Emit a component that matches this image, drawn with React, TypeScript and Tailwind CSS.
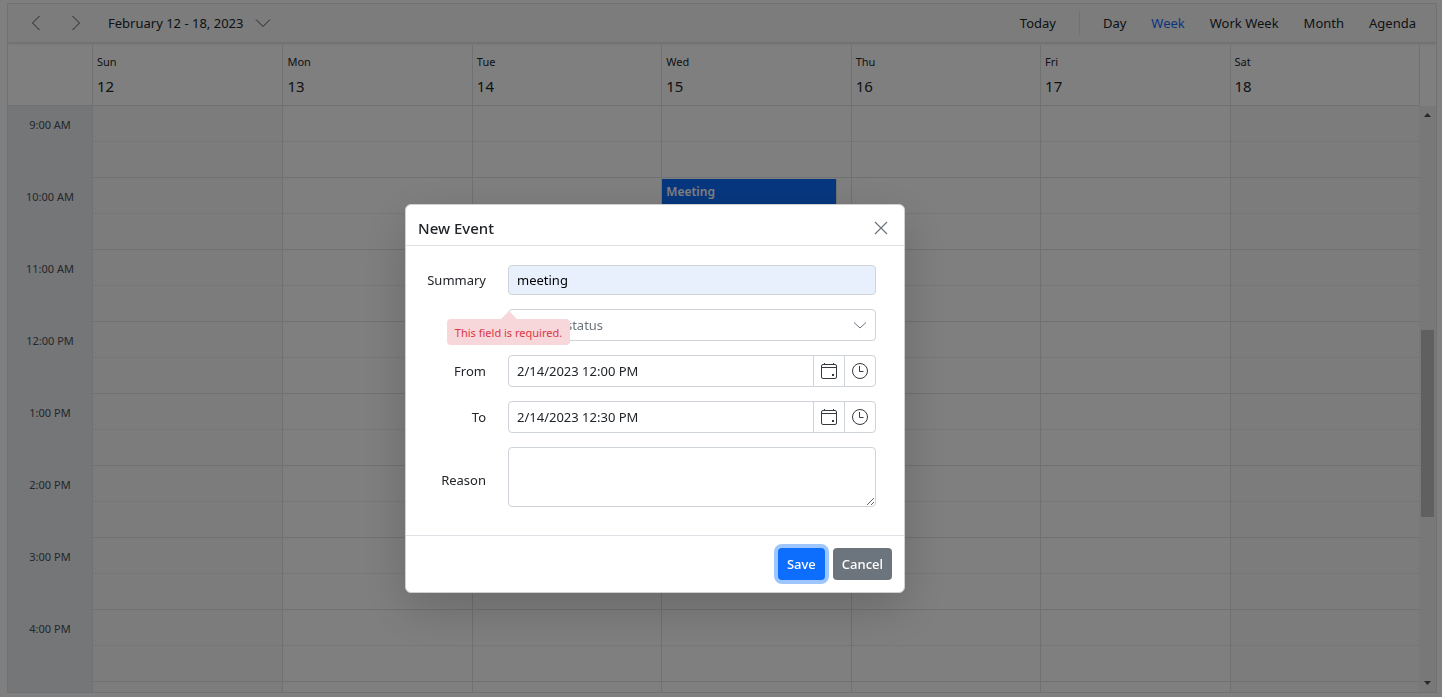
import React from "react";

const days = [
  { name: "Sun", date: 12, off: true },
  { name: "Mon", date: 13, off: false },
  { name: "Tue", date: 14, off: false },
  { name: "Wed", date: 15, off: false },
  { name: "Thu", date: 16, off: false },
  { name: "Fri", date: 17, off: false },
  { name: "Sat", date: 18, off: true },
];

const hours = [
  "9:00 AM",
  "10:00 AM",
  "11:00 AM",
  "12:00 PM",
  "1:00 PM",
  "2:00 PM",
  "3:00 PM",
  "4:00 PM",
];

const slots = [...hours.flatMap((hour) => [hour, ""]), ""];

const views = ["Day", "Week", "Work Week", "Month", "Agenda"];

function Chevron({ points, className }: { points: string; className: string }) {
  return (
    <svg className={className} viewBox="0 0 16 16" fill="none" stroke="currentColor" aria-hidden="true">
      <polyline points={points} />
    </svg>
  );
}

function CalendarIcon() {
  return (
    <svg className="size-4" viewBox="0 0 16 16" fill="none" stroke="currentColor" aria-hidden="true">
      <rect x="0.5" y="1.5" width="15" height="14" rx="1.5" />
      <path d="M0.5 4.5h15M3.5 0v2M12.5 0v2" />
      <rect x="11" y="11" width="2" height="2" fill="currentColor" stroke="none" />
    </svg>
  );
}

function ClockIcon() {
  return (
    <svg className="size-4" viewBox="0 0 16 16" fill="none" stroke="currentColor" aria-hidden="true">
      <circle cx="8" cy="8" r="7.5" />
      <path d="M7.5 3v5.5H11.5" />
    </svg>
  );
}

function Toolbar() {
  return (
    <header className="flex h-[39px] shrink-0 items-center border-b border-[#dee2e6] bg-[#f8f9fa] pr-5 pl-5 shadow-sm">
      <button aria-label="Previous week" className="text-[#495057]">
        <Chevron points="11.5,1 4.5,8 11.5,15" className="size-4" />
      </button>
      <button aria-label="Next week" className="ml-6 text-[#495057]">
        <Chevron points="4.5,1 11.5,8 4.5,15" className="size-4" />
      </button>
      <button className="ml-6 flex items-center gap-3">
        February 12 - 18, 2023
        <Chevron points="1,4.5 8,11.5 15,4.5" className="size-4 text-[#495057]" />
      </button>
      <nav className="ml-auto flex items-center gap-[25px]">
        <button>Today</button>
        <span className="-mx-0.5 h-6 w-px bg-[#dee2e6]" />
        {views.map((view) => (
          <button key={view} className={view === "Week" ? "text-[#0d6efd]" : ""}>
            {view}
          </button>
        ))}
      </nav>
    </header>
  );
}

function WeekTable() {
  return (
    <table className="w-full table-fixed border-separate border-spacing-0">
      <colgroup>
        <col className="w-[85px]" />
        {days.map((day) => (
          <col key={day.name} />
        ))}
      </colgroup>
      <thead>
        <tr className="h-[61px]">
          <td className="border-r border-b border-[#dee2e6]" />
          {days.map((day, i) => (
            <th
              key={day.name}
              scope="col"
              className={
                i === 0
                  ? "border-b border-[#dee2e6] p-0 pl-1 text-left font-normal"
                  : "border-b border-l border-[#dee2e6] p-0 pl-1 text-left font-normal"
              }
            >
              <div className="text-[11px] leading-4">{day.name}</div>
              <div className="mt-1.5 text-[15px] leading-5">{day.date}</div>
            </th>
          ))}
        </tr>
      </thead>
      <tbody>
        {slots.map((label, row) => (
          <tr key={row} className="h-9">
            <td className="border-r border-[#dee2e6] bg-[#e9ecef] p-0 pt-0.5 text-center text-[11px] leading-4 text-[#495057]">
              {label}
            </td>
            {days.map((day, i) => (
              <td
                key={day.name}
                className={[
                  "relative border-[#dee2e6] p-0",
                  i > 0 ? "border-l" : "",
                  day.off ? "bg-[#f8f9fa]" : "bg-white",
                ].join(" ")}
              >
                <div
                  className={
                    row % 2 === 0
                      ? "h-9 border-b border-dotted border-[#dee2e6]"
                      : "h-9 border-b border-[#dee2e6]"
                  }
                />
                {day.name === "Wed" && label === "10:00 AM" && (
                  <div className="absolute top-px left-0 h-[70px] w-[93%] border-r border-[#dee2e6] bg-[#0d6efd] p-1 pt-[5px] text-xs leading-4 font-semibold text-white">
                    Meeting
                  </div>
                )}
              </td>
            ))}
          </tr>
        ))}
      </tbody>
    </table>
  );
}

function Schedule() {
  return (
    <main className="flex h-full flex-col overflow-hidden border border-[#dee2e6] bg-white">
      <Toolbar />
      <div className="flex min-h-0 flex-1 pt-0.5">
        <div className="min-w-0 flex-1 overflow-hidden">
          <WeekTable />
        </div>
        <div className="flex w-[17px] shrink-0 flex-col">
          <div className="h-[61px] border-l border-[#dee2e6]" />
          <div className="flex min-h-0 flex-1 flex-col items-center justify-between bg-[#f1f1f1] py-[7px]">
            <svg className="h-1 w-[7px]" viewBox="0 0 7 4" fill="#505050" aria-hidden="true">
              <path d="M0 4L3.5 0L7 4z" />
            </svg>
            <div className="mt-12 h-[187px] w-[13px] bg-[#c1c1c1]" />
            <svg className="h-1 w-[7px]" viewBox="0 0 7 4" fill="#505050" aria-hidden="true">
              <path d="M0 0L3.5 4L7 0z" />
            </svg>
          </div>
        </div>
      </div>
    </main>
  );
}

function DateTimeField({ id, label, value }: { id: string; label: string; value: string }) {
  return (
    <>
      <label htmlFor={id} className="text-right">
        {label}
      </label>
      <div className="flex h-8 overflow-hidden rounded border border-[#ced4da]">
        <input id={id} defaultValue={value} className="min-w-0 flex-1 px-2 outline-none" />
        <button
          type="button"
          aria-label={`${label} date`}
          className="flex w-[31px] items-center justify-center border-l border-[#ced4da] text-[#343a40]"
        >
          <CalendarIcon />
        </button>
        <button
          type="button"
          aria-label={`${label} time`}
          className="flex w-[31px] items-center justify-center border-l border-[#ced4da] text-[#343a40]"
        >
          <ClockIcon />
        </button>
      </div>
    </>
  );
}

function EventDialog() {
  return (
    <form
      role="dialog"
      aria-labelledby="dialog-title"
      onSubmit={(e) => e.preventDefault()}
      className="w-[500px] rounded-md border border-[#d0d0d2] bg-white shadow-[0_16px_48px_rgba(0,0,0,0.175)]"
    >
      <div className="flex h-[41px] items-center justify-between border-b border-[#dee2e6] pt-1.5 pr-4 pl-3">
        <h2 id="dialog-title" className="text-[15px] leading-5 font-medium">
          New Event
        </h2>
        <button type="button" aria-label="Close" className="text-[#6c757d]">
          <svg className="size-3.5" viewBox="0 0 14 14" fill="none" stroke="currentColor" strokeWidth="1.2" aria-hidden="true">
            <path d="M1 1L13 13M13 1L1 13" />
          </svg>
        </button>
      </div>
      <div className="grid grid-cols-[80px_1fr] items-center gap-x-[22px] gap-y-3.5 pt-[19px] pr-7 pb-7">
        <label htmlFor="summary" className="text-right">
          Summary
        </label>
        <div className="relative h-[30px]">
          <input
            id="summary"
            defaultValue="meeting"
            className="h-full w-full rounded border border-[#ced4da] bg-[#e8f0fe] px-2 text-black outline-none"
          />
          <div
            role="alert"
            className="absolute top-[54px] -left-[61px] z-10 flex h-[26px] w-[123px] items-center justify-center rounded bg-[#f8d7da] pt-0.5 text-[11px] leading-4 whitespace-nowrap text-[#dc3545]"
          >
            This field is required.
            <svg className="absolute -top-2 left-[54px] h-2 w-4" viewBox="0 0 16 8" fill="#f8d7da" aria-hidden="true">
              <path d="M0 8L8 0L16 8z" />
            </svg>
          </div>
        </div>

        <div className="relative col-start-2 h-8">
          <select
            id="status"
            aria-label="Status"
            className="h-full w-full appearance-none rounded border border-[#ced4da] bg-white px-2 text-[#6c757d] outline-none"
          >
            <option>Choose status</option>
          </select>
          <Chevron
            points="2,5.5 8,11 14,5.5"
            className="pointer-events-none absolute top-2 right-2 size-4 text-[#6c757d]"
          />
        </div>

        <DateTimeField id="from" label="From" value="2/14/2023 12:00 PM" />
        <DateTimeField id="to" label="To" value="2/14/2023 12:30 PM" />

        <label htmlFor="reason" className="pt-1.5 text-right">
          Reason
        </label>
        <textarea id="reason" className="block h-[60px] w-full resize rounded border border-[#ced4da] px-2 outline-none" />
      </div>
      <div className="flex justify-end gap-2 border-t border-[#dee2e6] p-3 font-medium text-white">
        <button type="submit" className="h-8 rounded bg-[#0d6efd] px-[9px] ring-4 ring-[#9ec5fe]">
          Save
        </button>
        <button type="button" className="h-8 rounded bg-[#6c757d] px-[9px]">
          Cancel
        </button>
      </div>
    </form>
  );
}

export default function App() {
  return (
    <div className="h-screen bg-white pt-[3px] pr-[5px] pb-1 pl-[7px] font-['Noto_Sans',sans-serif] text-[13px] leading-5 text-[#212529]">
      <Schedule />
      <div className="fixed inset-0 flex items-start justify-center bg-black/50 pt-[204px] pr-[132px]">
        <EventDialog />
      </div>
    </div>
  );
}
